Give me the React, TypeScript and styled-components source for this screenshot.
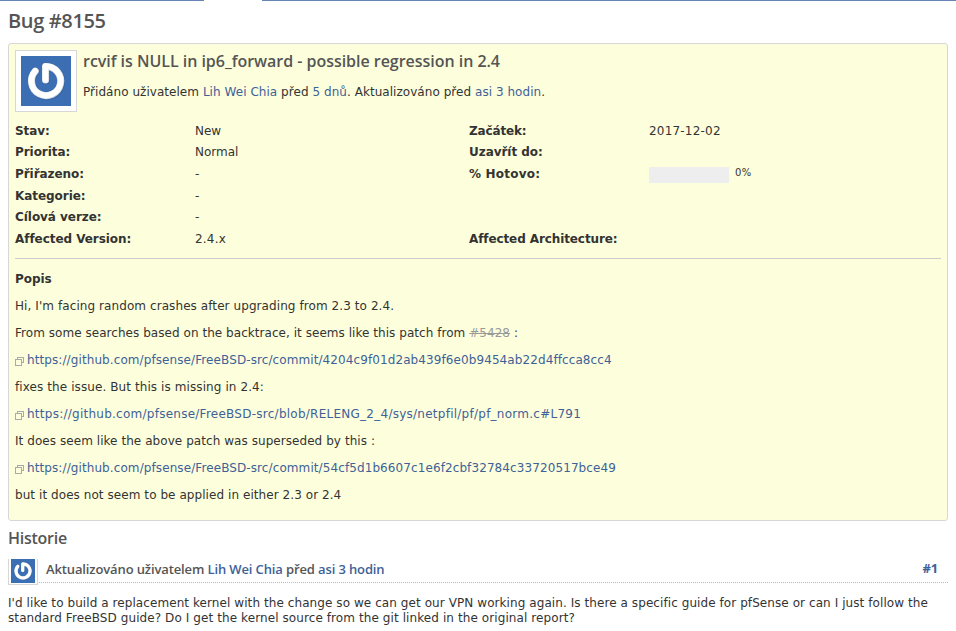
import React from "react";
import styled, { createGlobalStyle } from "styled-components";

const GlobalStyle = createGlobalStyle`
  * { box-sizing: border-box; }
  html, body { margin: 0; padding: 0; background: #fff; }
  body {
    overflow: hidden;
    font: 12px/15px "DejaVu Sans", Verdana, sans-serif;
    color: #333;
  }
`;

const headingFont = `"Open Sans", "Trebuchet MS", sans-serif`;

const Page = styled.main`
  display: flex;
  flex-direction: column;
  width: 956px;
  height: 631px;
`;

const TabLine = styled.div`
  display: grid;
  grid-template-columns: 204px 58px 1fr;
  height: 1px;
  flex: none;
`;

const TabSegment = styled.div<{ $open?: boolean }>`
  background: ${(p) => (p.$open ? "#fff" : "#6585b5")};
`;

const Content = styled.div`
  display: flex;
  flex-direction: column;
  padding: 6px 8px 0;
`;

const PageTitle = styled.h2`
  margin: 0 0 8px;
  height: 28px;
  font: 600 20px/28px ${headingFont};
  letter-spacing: -0.35px;
  color: #555;
  white-space: nowrap;
`;

const IssueBox = styled.section`
  display: flex;
  flex-direction: column;
  height: 478px;
  padding: 6px;
  border: 1px solid #d7d7d7;
  border-radius: 3px;
  background: #fdffdc;
`;

const IssueHeader = styled.header`
  display: flex;
  gap: 6px;
  height: 62px;
`;

const AvatarFrame = styled.div<{ $small?: boolean }>`
  flex: none;
  width: ${(p) => (p.$small ? 30 : 62)}px;
  height: ${(p) => (p.$small ? 26 : 62)}px;
  padding: ${(p) => (p.$small ? "0 2px 1px" : "5px")};
  border: 1px solid #d7d7d7;
  ${(p) => p.$small && "border-top: 0;"}
  background: #fff;

  svg { display: block; }
`;

const HeaderText = styled.div`
  display: flex;
  flex-direction: column;
`;

const Subject = styled.h3`
  margin: 0;
  height: 22px;
  font: 600 16px/22px ${headingFont};
  letter-spacing: -0.03px;
  color: #555;
  white-space: nowrap;
`;

const Line = styled.p<{ $track?: number }>`
  margin: 0;
  height: 15px;
  line-height: 15px;
  letter-spacing: ${(p) => p.$track ?? 0}px;
  white-space: nowrap;
`;

const Author = styled(Line)`
  margin-top: 13px;
`;

const Link = styled.a`
  color: #3e6198;
  text-decoration: none;
`;

const ClosedIssue = styled(Link)`
  color: #999;
  text-decoration: line-through;
`;

const Attributes = styled.div`
  display: grid;
  grid-template-columns: 180px 274px 180px 1fr;
  grid-auto-rows: 21.6px;
  margin-top: 8px;
  height: 137px;
  padding-top: 0.5px;
  align-items: center;
`;

const Label = styled.div<{ $track?: number }>`
  font-weight: bold;
  letter-spacing: ${(p) => p.$track ?? -0.05}px;
  white-space: nowrap;
`;

const Value = styled.div<{ $track?: number }>`
  letter-spacing: ${(p) => p.$track ?? 0}px;
  white-space: nowrap;
`;

const Progress = styled.div`
  display: flex;
  gap: 6px;
  padding-top: 2px;
`;

const ProgressTrack = styled.div`
  width: 80px;
  height: 16px;
  background: #eee;
`;

const ProgressLabel = styled.span`
  font-size: 10px;
  line-height: 12px;
  letter-spacing: 0.4px;
`;

const Divider = styled.hr`
  flex: none;
  width: 100%;
  height: 1px;
  margin: 1px 0 0;
  border: 0;
  background: #ccc;
`;

const Description = styled.div`
  display: flex;
  flex-direction: column;
  gap: 12px;
  padding-top: 13px;
`;

const ExternalLine = styled(Line)`
  display: flex;
  gap: 3px;

  svg { flex: none; margin-top: 4px; }
`;

const HistoryTitle = styled.h3`
  margin: 6px 0 0;
  height: 22px;
  font: 600 16px/22px ${headingFont};
  letter-spacing: -0.25px;
  color: #555;
`;

const JournalHeader = styled.div`
  display: flex;
  gap: 1px;
  height: 26px;
  margin-top: 10px;
`;

const JournalTitle = styled.h4`
  display: flex;
  flex: 1;
  justify-content: space-between;
  margin: 0;
  height: 24px;
  padding: 0 10px 0 7px;
  border-bottom: 1px dotted #bbb;
  font: 600 13px/21px ${headingFont};
  letter-spacing: -0.125px;
  color: #555;
  white-space: nowrap;
`;

const Anchor = styled(Link)`
  font-weight: 700;
  line-height: 19px;
  letter-spacing: -0.2px;
`;

const JournalBody = styled.div`
  display: flex;
  flex-direction: column;
  margin-top: 11px;
`;

function PowerAvatar({ size }: { size: number }) {
  return (
    <svg width={size} height={size} viewBox="0 0 50 50">
      <rect width="50" height="50" fill="#3c6eb4" />
      <g fill="none" strokeLinecap="round" strokeLinejoin="round">
        <path d="M14.9 15.9A14.6 14.6 0 1 0 25.2 11V24.8" stroke="#2c5a9c" strokeWidth="7.4" opacity=".5" />
        <path d="M14.3 15.2A14.6 14.6 0 1 0 24.6 10.4V24" stroke="#d9dde2" strokeWidth="7" />
        <path d="M14.1 15A14.6 14.6 0 1 0 24.3 10.2V23.7" stroke="#fff" strokeWidth="5.8" />
      </g>
    </svg>
  );
}

function ExternalIcon() {
  return (
    <svg width="9" height="9" viewBox="0 0 9 9" fill="none" stroke="#aaa" shapeRendering="crispEdges">
      <path d="M2.5 2.5V.5H8.5V5.5H6.5" />
      <rect x=".5" y="2.5" width="6" height="6" rx="1" />
    </svg>
  );
}

function ExternalLink({ url, track }: { url: string; track: number }) {
  return (
    <ExternalLine $track={track}>
      <ExternalIcon />
      <Link>{url}</Link>
    </ExternalLine>
  );
}

export default function App() {
  return (
    <Page>
      <GlobalStyle />
      <TabLine>
        <TabSegment />
        <TabSegment $open />
        <TabSegment />
      </TabLine>
      <Content>
        <PageTitle>Bug #8155</PageTitle>
        <IssueBox>
          <IssueHeader>
            <AvatarFrame>
              <PowerAvatar size={50} />
            </AvatarFrame>
            <HeaderText>
              <Subject>rcvif is NULL in ip6_forward - possible regression in 2.4</Subject>
              <Author $track={0.045}>
                Přidáno uživatelem <Link>Lih Wei Chia</Link> před <Link>5 dnů</Link>. Aktualizováno před{" "}
                <Link>asi 3 hodin</Link>.
              </Author>
            </HeaderText>
          </IssueHeader>
          <Attributes>
            <Label>Stav:</Label>
            <Value>New</Value>
            <Label $track={-0.15}>Začátek:</Label>
            <Value $track={0.2}>2017-12-02</Value>

            <Label>Priorita:</Label>
            <Value>Normal</Value>
            <Label>Uzavřít do:</Label>
            <Value />

            <Label>Přiřazeno:</Label>
            <Value>-</Value>
            <Label $track={0.2}>% Hotovo:</Label>
            <Progress>
              <ProgressTrack />
              <ProgressLabel>0%</ProgressLabel>
            </Progress>

            <Label>Kategorie:</Label>
            <Value>-</Value>
            <Label />
            <Value />

            <Label>Cílová verze:</Label>
            <Value>-</Value>
            <Label />
            <Value />

            <Label>Affected Version:</Label>
            <Value $track={0.2}>2.4.x</Value>
            <Label $track={-0.1}>Affected Architecture:</Label>
            <Value />
          </Attributes>
          <Divider />
          <Description>
            <Label>Popis</Label>
            <Line $track={0.08}>Hi, I'm facing random crashes after upgrading from 2.3 to 2.4.</Line>
            <Line $track={0.045}>
              From some searches based on the backtrace, it seems like this patch from{" "}
              <ClosedIssue>#5428</ClosedIssue> :
            </Line>
            <ExternalLink
              track={0.092}
              url="https://github.com/pfsense/FreeBSD-src/commit/4204c9f01d2ab439f6e0b9454ab22d4ffcca8cc4"
            />
            <Line $track={0.09}>fixes the issue. But this is missing in 2.4:</Line>
            <ExternalLink
              track={0.254}
              url="https://github.com/pfsense/FreeBSD-src/blob/RELENG_2_4/sys/netpfil/pf/pf_norm.c#L791"
            />
            <Line $track={0.059}>It does seem like the above patch was superseded by this :</Line>
            <ExternalLink
              track={0.095}
              url="https://github.com/pfsense/FreeBSD-src/commit/54cf5d1b6607c1e6f2cbf32784c33720517bce49"
            />
            <Line $track={0.065}>but it does not seem to be applied in either 2.3 or 2.4</Line>
          </Description>
        </IssueBox>
        <HistoryTitle>Historie</HistoryTitle>
        <JournalHeader>
          <AvatarFrame $small>
            <PowerAvatar size={24} />
          </AvatarFrame>
          <JournalTitle>
            <span>
              Aktualizováno uživatelem <Link>Lih Wei Chia</Link> před <Link>asi 3 hodin</Link>
            </span>
            <Anchor>#1</Anchor>
          </JournalTitle>
        </JournalHeader>
        <JournalBody>
          <Line $track={0.077}>
            I'd like to build a replacement kernel with the change so we can get our VPN working again. Is there a
            specific guide for pfSense or can I just follow the
          </Line>
          <Line $track={0.091}>
            standard FreeBSD guide? Do I get the kernel source from the git linked in the original report?
          </Line>
        </JournalBody>
      </Content>
    </Page>
  );
}
